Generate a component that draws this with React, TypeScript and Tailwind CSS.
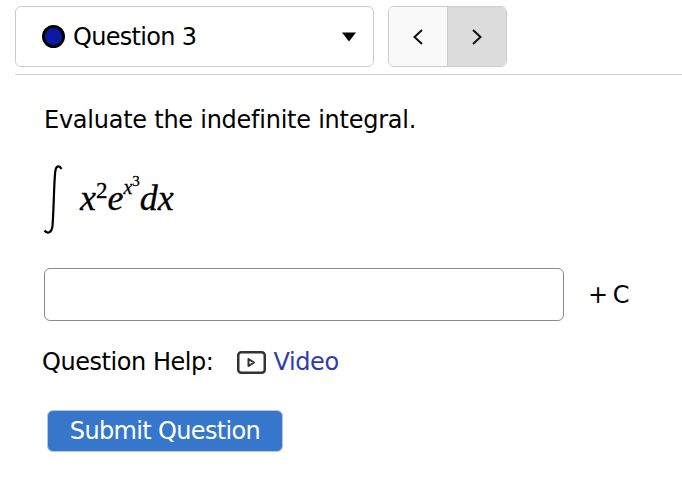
const uiFont = "font-['DejaVu_Sans',sans-serif]";

function Chevron({ dir }: { dir: "left" | "right" }) {
  return (
    <svg width="12" height="18" viewBox="0 0 12 18" fill="none" stroke="#111" strokeWidth="2">
      <path d={dir === "left" ? "M10 2 L2.5 9 L10 16" : "M2 2 L9.5 9 L2 16"} />
    </svg>
  );
}

export default function App() {
  return (
    <div className={`w-[682px] h-[478px] bg-white overflow-hidden text-black ${uiFont}`}>
      <div className="ml-[15px] pt-[6px]">
        <div className="flex h-[61px]">
          <div className="w-[359px] flex items-center border border-[#ccc] rounded-[6px] pl-[26px] pr-[17px]">
            <span className="w-[23px] h-[23px] rounded-full bg-[#0a1aa5] border-[3px] border-black" />
            <span className="ml-[8px] text-[24px] leading-none tracking-[-0.7px]">Question 3</span>
            <svg className="ml-auto" width="14" height="10" viewBox="0 0 14 10">
              <path d="M0 0.5 H14 L7 9.5 Z" fill="#000" />
            </svg>
          </div>
          <div className="ml-[14px] w-[119px] flex rounded-[6px] border border-[#ccc] overflow-hidden">
            <div className="w-[59px] bg-[#f9f9f9] border-r border-[#ccc] flex items-center justify-center">
              <Chevron dir="left" />
            </div>
            <div className="flex-1 bg-[#dcdcdc] flex items-center justify-center">
              <Chevron dir="right" />
            </div>
          </div>
        </div>
        <div className="mt-[7px] h-px bg-[#ccc]" />
      </div>

      <div className="pl-[44px]">
        <p className="mt-[28px] text-[24px] leading-[34px] tracking-[-0.25px]">Evaluate the indefinite integral.</p>

        <div className="mt-[27px] -ml-[2px] h-[72px] flex items-center font-['Liberation_Serif',serif] text-[36px] leading-none [-webkit-text-stroke:0.3px_black]">
          <svg width="22" height="72" viewBox="0 0 22 72" fill="none" stroke="#000">
            <path d="M19.5 5 C17.5 1 14.5 1.5 13.5 6 C12 14 12 42 10.5 62 C10 68 6 71 2.5 66.5" strokeWidth="2.2" />
          </svg>
          <div className="ml-[16px] flex items-baseline italic relative -top-[2px]">
            <span>x</span>
            <span className="not-italic text-[23px] relative -top-[12px]">2</span>
            <span>e</span>
            <span className="text-[20px] relative -top-[16px]">x</span>
            <span className="not-italic text-[15px] relative -top-[24px]">3</span>
            <span>dx</span>
          </div>
        </div>

        <div className="mt-[32px] flex items-center">
          <input className="w-[520px] h-[53px] border border-[#8a8a8a] rounded-[6px] bg-white" />
          <span className="ml-[24px] text-[24px] leading-none tracking-[-1.5px]">+ C</span>
        </div>

        <div className="mt-[23px] -ml-[2px] flex items-center h-[36px]">
          <span className="text-[24px] leading-none tracking-[-0.45px]">Question Help:</span>
          <svg className="ml-[24px]" width="29" height="23" viewBox="0 0 29 23" fill="none">
            <rect x="1.25" y="1.25" width="26.5" height="20.5" rx="3" stroke="#333" strokeWidth="2.5" />
            <path d="M11.5 8 L17 11.5 L11.5 15 Z" stroke="#333" strokeWidth="2" strokeLinejoin="round" />
          </svg>
          <a className="ml-[7px] text-[24px] leading-none text-[#2d3cae] tracking-[-0.4px]">Video</a>
        </div>

        <button className="mt-[30px] ml-[3px] w-[236px] h-[42px] rounded-[6px] border border-[#b8c8dc] bg-[#3777cb] text-white text-[24px] leading-none tracking-[-0.65px]">
          Submit Question
        </button>
      </div>
    </div>
  );
}
